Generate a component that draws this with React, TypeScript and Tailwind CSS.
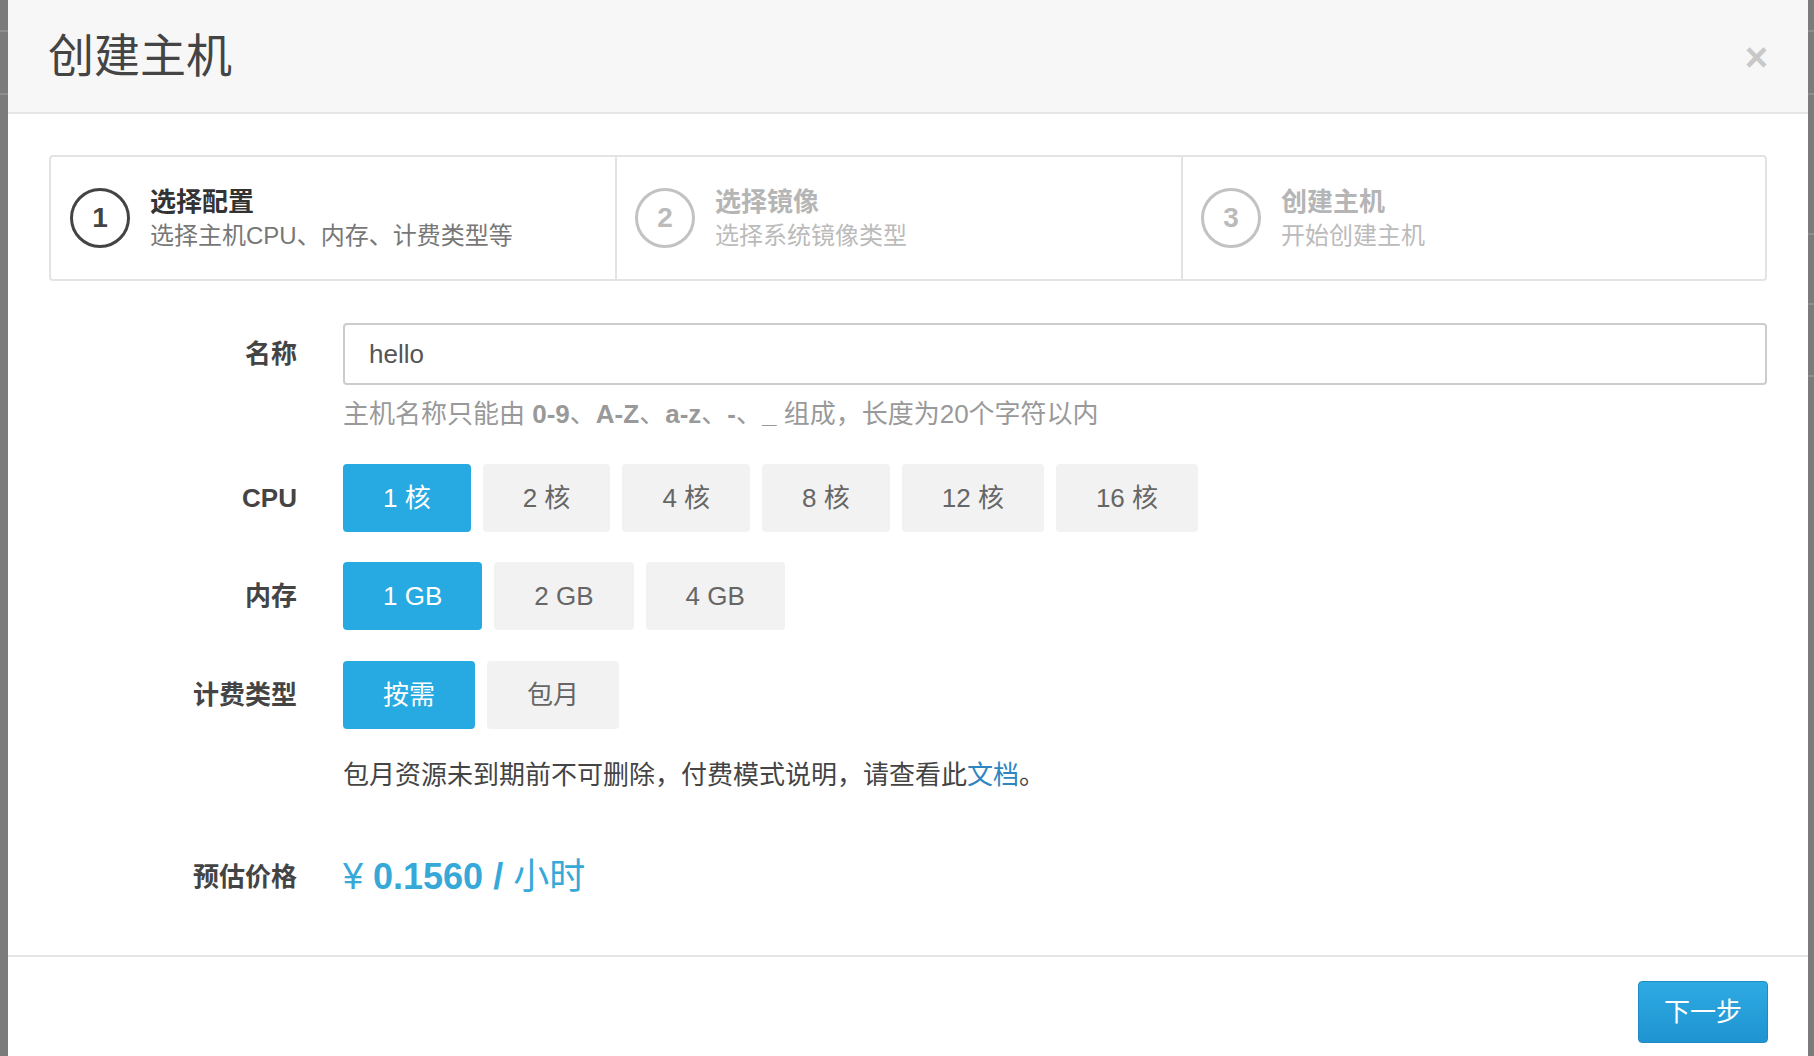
import { useState } from 'react';

const font = { fontFamily: '"Liberation Sans", "Noto Sans CJK SC", sans-serif' };

const steps = [
  { no: 1, title: '选择配置', desc: '选择主机CPU、内存、计费类型等', active: true },
  { no: 2, title: '选择镜像', desc: '选择系统镜像类型', active: false },
  { no: 3, title: '创建主机', desc: '开始创建主机', active: false },
];

const cpuOptions = ['1 核', '2 核', '4 核', '8 核', '12 核', '16 核'];
const memOptions = ['1 GB', '2 GB', '4 GB'];
const billOptions = ['按需', '包月'];

function OptionGroup({
  options,
  value,
  onChange,
}: {
  options: string[];
  value: string;
  onChange: (v: string) => void;
}) {
  return (
    <div className="flex gap-[12px]">
      {options.map((opt) => (
        <button
          key={opt}
          onClick={() => onChange(opt)}
          className={`h-[68px] px-[40px] rounded-[4px] text-[26px] leading-none ${
            value === opt ? 'bg-[#27a9e1] text-white' : 'bg-[#f2f2f2] text-[#666]'
          }`}
        >
          {opt}
        </button>
      ))}
    </div>
  );
}

export default function App() {
  const [name, setName] = useState('hello');
  const [cpu, setCpu] = useState('1 核');
  const [mem, setMem] = useState('1 GB');
  const [bill, setBill] = useState('按需');

  return (
    <div className="w-full h-[1056px] bg-[#7b7b7b] flex overflow-hidden" style={font}>
      {/* backdrop edge, left */}
      <div className="w-[8px] shrink-0 flex flex-col">
        <div className="h-[32px] border-b-2 border-[#8e8e8e]" />
        <div className="h-[63px] border-b-2 border-[#8e8e8e]" />
      </div>

      {/* modal */}
      <div className="flex-1 bg-white flex flex-col">
        {/* Header */}
        <div className="h-[114px] shrink-0 bg-[#f7f7f7] border-b-2 border-[#e5e5e5] flex items-center justify-between pl-[40px] pr-[40px]">
          <h1 className="text-[46px] text-[#444] leading-none">创建主机</h1>
          <button className="text-[40px] font-bold text-[#c8c8c8] leading-none mt-[2px]">×</button>
        </div>

        {/* Body */}
        <div className="px-[41px] pt-[41px]">
          {/* Steps */}
          <div className="grid grid-cols-[564px_566px_1fr] h-[126px] border-2 border-[#e3e3e3] rounded-[4px]">
            {steps.map((s, i) => (
              <div
                key={s.no}
                className={`flex items-center gap-[20px] ${i > 0 ? 'border-l-2 border-[#e3e3e3] pl-[18px]' : 'pl-[19px]'}`}
              >
                <div
                  className={`w-[60px] h-[60px] rounded-full border-[3px] flex items-center justify-center text-[28px] font-bold ${
                    s.active ? 'border-[#444] text-[#444]' : 'border-[#c2c2c2] text-[#bbb]'
                  }`}
                >
                  {s.no}
                </div>
                <div className="flex flex-col mt-[2px]">
                  <span className={`text-[26px] font-bold leading-[34px] ${s.active ? 'text-[#333]' : 'text-[#b5b5b5]'}`}>
                    {s.title}
                  </span>
                  <span className={`text-[24px] leading-[34px] ${s.active ? 'text-[#777]' : 'text-[#bbb]'}`}>{s.desc}</span>
                </div>
              </div>
            ))}
          </div>

          {/* Form */}
          <div className="grid grid-cols-[248px_1fr] gap-x-[46px] mt-[42px] items-center">
            <label className="text-right text-[26px] font-bold text-[#444]">名称</label>
            <input
              value={name}
              onChange={(e) => setName(e.target.value)}
              className="h-[62px] border-2 border-[#ccc] rounded-[4px] px-[24px] text-[26px] text-[#555] outline-none"
            />

            <div />
            <p className="text-[26px] leading-[36px] text-[#999] mt-[11px]">
              主机名称只能由 <b>0-9</b>、<b>A-Z</b>、<b>a-z</b>、<b>-</b>、<b>_</b> 组成，长度为20个字符以内
            </p>

            <label className="text-right text-[26px] font-bold text-[#444] mt-[32px]">CPU</label>
            <div className="mt-[32px]">
              <OptionGroup options={cpuOptions} value={cpu} onChange={setCpu} />
            </div>

            <label className="text-right text-[26px] font-bold text-[#444] mt-[30px]">内存</label>
            <div className="mt-[30px]">
              <OptionGroup options={memOptions} value={mem} onChange={setMem} />
            </div>

            <label className="text-right text-[26px] font-bold text-[#444] mt-[31px]">计费类型</label>
            <div className="mt-[31px]">
              <OptionGroup options={billOptions} value={bill} onChange={setBill} />
            </div>

            <div />
            <p className="text-[26px] leading-[36px] text-[#444] mt-[28px]">
              包月资源未到期前不可删除，付费模式说明，请查看此<a className="text-[#2e86c1]">文档</a>。
            </p>

            <label className="text-right text-[26px] font-bold text-[#444] mt-[60px]">预估价格</label>
            <div className="mt-[60px] text-[36px] leading-[48px] text-[#36a9d9]">
              ¥ <span className="font-bold">0.1560 /</span> 小时
            </div>
          </div>
        </div>

        {/* Footer */}
        <div className="mt-auto border-t-2 border-[#e5e5e5] h-[101px] shrink-0 flex items-start justify-end pr-[40px] pt-[24px]">
          <button className="w-[130px] h-[62px] rounded-[4px] bg-gradient-to-b from-[#2eaae3] to-[#1f94d0] border border-[#1d8bc4] text-white text-[26px]">
            下一步
          </button>
        </div>
      </div>

      {/* backdrop edge, right */}
      <div className="w-[6px] shrink-0 flex flex-col">
        <div className="h-[32px] border-b-2 border-[#8e8e8e]" />
        <div className="h-[63px] border-b-2 border-[#8e8e8e]" />
        <div className="h-[140px] border-b-2 border-[#8e8e8e]" />
        <div className="h-[70px] border-b-2 border-[#8e8e8e]" />
        <div className="h-[72px] border-b-2 border-[#8e8e8e]" />
      </div>
    </div>
  );
}
